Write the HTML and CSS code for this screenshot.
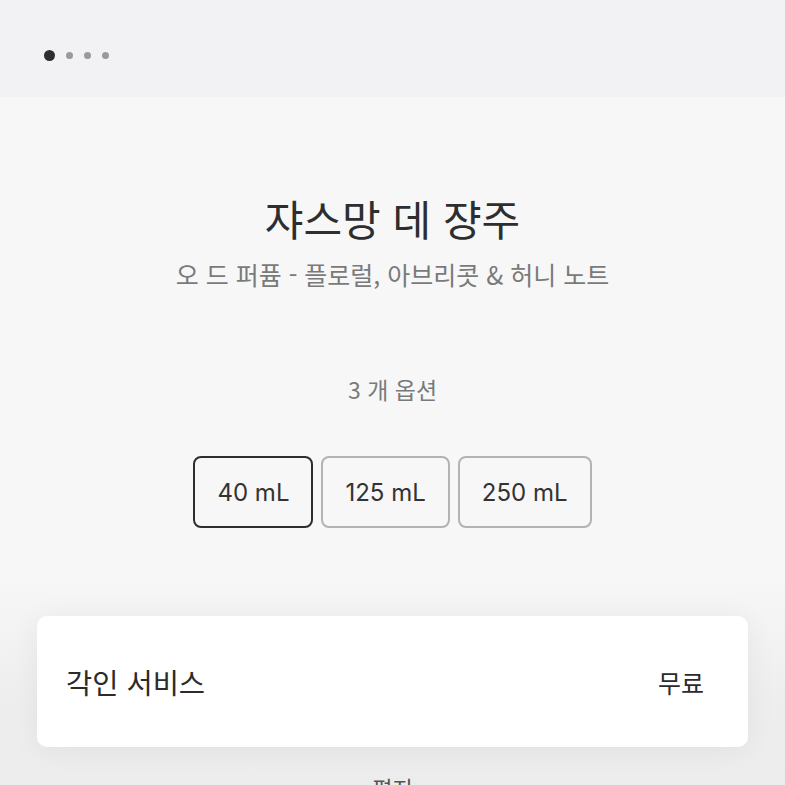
FILE: index.html
```html
<!DOCTYPE html>
<html lang="ko">
<head>
<meta charset="utf-8">
<link rel="stylesheet" href="styles.css">
</head>
<body>
<div class="topbar">
  <div class="dots">
    <span class="dot active"></span>
    <span class="dot"></span>
    <span class="dot"></span>
    <span class="dot"></span>
  </div>
</div>
<main class="product">
  <h1 class="title">쟈스망 데 쟝주</h1>
  <p class="subtitle">오 드 퍼퓸 - 플로럴, 아브리콧 &amp; 허니 노트</p>
  <p class="options-label">3 개 옵션</p>
  <div class="sizes">
    <button class="size selected">40 mL</button>
    <button class="size">125 mL</button>
    <button class="size">250 mL</button>
  </div>
  <section class="card">
    <span class="card-title">각인 서비스</span>
    <span class="card-price">무료</span>
  </section>
  <p class="more">편지</p>
</main>
</body>
</html>
```
FILE: styles.css
```css
html, body {
  margin: 0;
  padding: 0;
}
body {
  background: #f7f7f7;
  font-family: "Noto Sans CJK KR", "Noto Sans", sans-serif;
  color: #333;
  height: 785px;
  overflow: hidden;
}
.topbar {
  height: 97px;
  background: #f2f2f4;
  display: flex;
  align-items: center;
  padding-left: 44px;
  padding-top: 13px;
  box-sizing: border-box;
}
.dots {
  display: flex;
  align-items: center;
  gap: 11px;
}
.dot {
  width: 7px;
  height: 7px;
  border-radius: 50%;
  background: #9a9a9c;
}
.dot.active {
  width: 11px;
  height: 11px;
  background: #2e2e30;
}
.product {
  display: flex;
  flex-direction: column;
  align-items: center;
  background: linear-gradient(#f7f7f7 0, #f7f7f7 480px, #eeeeee 600px, #ececec 100%);
}
.title {
  margin: 91px 0 0;
  font-size: 42px;
  font-weight: 400;
  line-height: 60px;
  color: #2e2e2e;
}
.subtitle {
  margin: 0;
  font-size: 25px;
  line-height: 40px;
  color: #7a7a7a;
  margin-top: 6px;
}
.options-label {
  margin: 78px 0 0;
  font-size: 23px;
  line-height: 34px;
  color: #7a7a7a;
}
.sizes {
  margin-top: 50px;
  display: flex;
  gap: 8px;
}
.size {
  height: 72px;
  padding: 0 22px;
  border: 2px solid #b3b3b3;
  border-radius: 8px;
  background: #f7f7f7;
  font-family: Inter, "Noto Sans", sans-serif;
  font-size: 24px;
  color: #333;
  box-sizing: border-box;
}
.size.selected {
  border-color: #2e2e2e;
  width: 120px;
}
.card {
  margin-top: 88px;
  width: 711px;
  height: 131px;
  box-sizing: border-box;
  background: #fff;
  border-radius: 10px;
  box-shadow: 0 2px 30px rgba(0, 0, 0, 0.06);
  display: flex;
  align-items: center;
  justify-content: space-between;
  padding: 0 44px 0 29px;
}
.card-title {
  font-size: 28.5px;
  color: #2b2b2b;
}
.card-price {
  font-size: 25px;
  color: #2b2b2b;
}
.more {
  margin: 24px 0 0;
  font-size: 22px;
  color: #555;
}
```
